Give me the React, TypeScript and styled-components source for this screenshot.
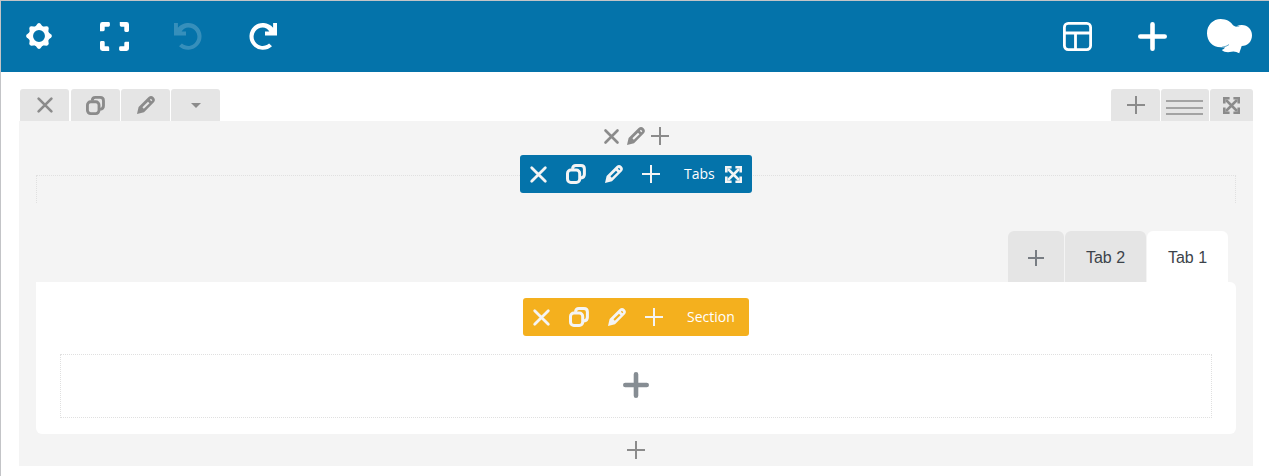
import React from 'react';
import styled, { createGlobalStyle } from 'styled-components';

const Global = createGlobalStyle`
  * { box-sizing: border-box; }
  body { margin: 0; background: #fff; font-family: "Open Sans", "Noto Sans", sans-serif; }
`;

const Page = styled.div`
  height: 476px;
  border-top: 1px solid #c3c4c7;
  border-left: 1px solid #c3c4c7;
  overflow: hidden;
`;

const Navbar = styled.header`
  display: flex;
  justify-content: space-between;
  height: 71px;
  background: #0473aa;
  color: #fff;
`;

const NavGroup = styled.div<{ $end?: boolean }>`
  display: flex;
  padding: ${p => (p.$end ? '0 1px 0 0' : '0')};
`;

const NavButton = styled.div<{ $dim?: boolean; $width?: number }>`
  display: flex;
  align-items: center;
  justify-content: center;
  width: ${p => p.$width ?? 75}px;
  height: 70px;
  opacity: ${p => (p.$dim ? 0.2 : 1)};
`;

const Icon = styled.svg`
  display: block;
  flex: none;
  overflow: visible;
`;

const Canvas = styled.main`
  padding: 17px 16px 0 18px;
`;

const RowControls = styled.div`
  display: flex;
  justify-content: space-between;
  padding-left: 1px;
  height: 32px;
  color: #8b8b8b;
`;

const ControlGroup = styled.div`
  display: flex;
  gap: 1px;
`;

const Control = styled.div<{ $width?: number; $gap?: number }>`
  display: flex;
  align-items: center;
  justify-content: center;
  width: ${p => p.$width ?? 49}px;
  margin-right: ${p => p.$gap ?? 0}px;
  background: #e5e5e5;
  border-radius: 3px 3px 0 0;
`;

const Lines = styled.div`
  width: 37px;
  height: 15px;
  margin: 5px 2px 0 0;
  display: flex;
  flex-direction: column;
  justify-content: space-between;
`;

const Line = styled.span`
  height: 2px;
  background: #a3a3a3;
`;

const Row = styled.section`
  height: 345px;
  padding: 0 17px;
  background: #f4f4f4;
`;

const ColumnControls = styled.div`
  display: flex;
  align-items: center;
  justify-content: center;
  height: 30px;
  color: #8b8b8b;
`;

const ToolbarArea = styled.div`
  display: flex;
  justify-content: center;
  height: 48px;
  padding-top: 4px;
`;

const Toolbar = styled.div<{ $color: string; $width: number }>`
  display: flex;
  align-items: center;
  width: ${p => p.$width}px;
  height: 38px;
  padding-left: 10px;
  border-radius: 3px;
  background: ${p => p.$color};
  color: #f4f4f4;
  flex: none;
`;

const ToolbarCell = styled.div<{ $width: number }>`
  width: ${p => p.$width}px;
  flex: none;
`;

const ToolbarLabel = styled.span<{ $width: number }>`
  width: ${p => p.$width}px;
  color: #fff;
  font-size: 14px;
  line-height: 20px;
  white-space: nowrap;
`;

const ElementFrame = styled.div`
  display: flex;
  justify-content: center;
  height: 28px;
  margin-top: 24px;
  border: 1px dotted #e0e0e0;
  border-bottom: 0;
`;

const ElementToolbar = styled.div`
  margin-top: -21px;
`;

const TabList = styled.div`
  display: flex;
  justify-content: flex-end;
  gap: 1px;
  height: 51px;
  margin-top: 28px;
  padding-right: 8px;
`;

const Tab = styled.div<{ $active?: boolean; $width?: number; $muted?: boolean }>`
  display: flex;
  align-items: center;
  justify-content: center;
  width: ${p => p.$width ?? 81}px;
  padding-top: 2px;
  border-radius: 6px 6px 0 0;
  background: ${p => (p.$active ? '#fff' : '#e5e5e5')};
  color: ${p => (p.$muted ? '#787d83' : '#3c434a')};
  font: 16px "Liberation Sans", Arial, sans-serif;
`;

const Panel = styled.div`
  height: 152px;
  padding: 12px 24px 0;
  border-radius: 0 6px 6px 6px;
  background: #fff;
`;

const DropZone = styled.div`
  display: flex;
  align-items: center;
  justify-content: center;
  height: 64px;
  margin-top: 12px;
  padding-bottom: 2px;
  border: 1px dotted #e0e0e0;
  color: #868d93;
`;

const RowFooter = styled.div`
  display: flex;
  align-items: center;
  justify-content: center;
  height: 32px;
  color: #8b8b8b;
`;

const Close = ({ size = 17, weight = 2.8 }) => (
  <Icon width={size} height={size} viewBox="0 0 17 17" fill="none" stroke="currentColor" strokeWidth={weight} strokeLinecap="round">
    <path d="M1.7 1.7 15.3 15.3M15.3 1.7 1.7 15.3" />
  </Icon>
);

const Plus = ({ size = 18, weight = 2 }) => (
  <Icon width={size} height={size} viewBox={`0 0 ${size} ${size}`} fill="none" stroke="currentColor" strokeWidth={weight} strokeLinecap={weight > 3 ? 'round' : 'butt'}>
    <path d={weight > 3
      ? `M${size / 2} ${weight / 2}V${size - weight / 2}M${weight / 2} ${size / 2}H${size - weight / 2}`
      : `M${size / 2} 0V${size}M0 ${size / 2}H${size}`} />
  </Icon>
);

const Copy = ({ size = 19 }) => (
  <Icon width={size} height={size} viewBox="0 0 20 20" fill="none" stroke="currentColor" strokeWidth="3">
    <rect x="1.5" y="6" width="12.2" height="12.5" rx="3.4" />
    <path d="M6.5 4.8C6.7 2.4 7.7 1.5 9.8 1.5H15C17.3 1.5 18.4 2.6 18.4 4.9V10.3C18.4 12.7 17.3 13.8 14.8 14.1" />
  </Icon>
);

const Pencil = ({ size = 18 }) => (
  <Icon width={size} height={size} viewBox="0 0 18 18" fill="currentColor" fillRule="evenodd">
    <path d="M0 18 1.6 10.9 11.6 1.1C13.3-.5 15-.3 16.6 1.2 18.2 2.9 18.4 4.7 16.9 6.3L7 16.2ZM5.4 11.3 6.8 12.7 12.5 7.2 11 5.7ZM12.9 3.8 14.3 5.2 15.3 4.2 13.9 2.8Z" />
  </Icon>
);

const Expand = () => (
  <Icon width="17" height="17" viewBox="0 0 17 17" fill="none" stroke="currentColor">
    <path strokeWidth="2.5" d="M3 3 14 14M14 3 3 14" />
    <path strokeWidth="2.6" d="M1.3 6.6V1.3H6.6M10.4 1.3H15.7V6.6M15.7 10.4V15.7H10.4M6.6 15.7H1.3V10.4" />
  </Icon>
);

const Gear = () => (
  <Icon width="26" height="26" viewBox="-13 -13 26 26" fill="currentColor">
    <circle r="8.1" fill="none" stroke="currentColor" strokeWidth="4.3" />
    {[0, 45, 90, 135, 180, 225, 270, 315].map(a => (
      <path key={a} transform={`rotate(${a})`} d="M-4.2-8.8-1.5-12.2Q0-13.8 1.5-12.2L4.2-8.8Z" />
    ))}
  </Icon>
);

const Fullscreen = () => (
  <Icon width="29" height="29" viewBox="0 0 29 29" fill="currentColor">
    {[0, 90, 180, 270].map(a => (
      <path key={a} transform={`rotate(${a} 14.5 14.5)`} d="M2.4 0H8.5Q9.9 0 9.9 1.4V3.3Q9.9 4.7 8.5 4.7H4.7V7.8Q4.7 9.2 3.3 9.2H0V2.4Q0 0 2.4 0Z" />
    ))}
  </Icon>
);

const Redo = ({ flip = false }) => (
  <Icon width="27" height="27" viewBox="0 0 27 27">
    <g transform={flip ? 'translate(27 0) scale(-1 1)' : undefined}>
      <path fill="currentColor" d="M27 0V12.4H15V8.5H19.4C17.6 5.9 15.4 4.5 12.8 4.5A9.2 9.2 0 1 0 19.1 20.4L22 23.2A13.4 13.4 0 1 1 23.1 4.7V0Z" />
    </g>
  </Icon>
);

const Layout = () => (
  <Icon width="29" height="29" viewBox="0 0 29 29" fill="none" stroke="currentColor" strokeWidth="2.8">
    <rect x="1.4" y="1.4" width="26.2" height="26.2" rx="3.8" />
    <path d="M1.5 11H27.5M12.5 11V27.5" />
  </Icon>
);

const Cloud = () => (
  <Icon width="45" height="35" viewBox="0 0 45 35" fill="currentColor">
    <path d="M13.7 0C19.6 0 23.8 2.8 26 6.3Q28.4 8.4 32.8 7.9Q31.4 7.2 29.3 7.2C38 3.5 45 8.8 45 16.2C45 22.6 40.7 26.8 34.7 27L32.2 34.3Q28.4 32 24.5 32.8C20.8 33.8 17 33.2 14.8 31.1Q16.9 30.3 18.2 28.6Q15.8 28.7 14.2 28.2C5.7 28.4 0 22.2 0 14.2C0 6.2 6 0 13.7 0Z" />
    <path d="M15 28.2Q19.5 27.6 22 25.6" fill="none" stroke="#0473aa" strokeWidth="0.6" />
  </Icon>
);

const Caret = () => (
  <Icon width="10" height="5" viewBox="0 0 10 5" fill="currentColor">
    <path d="M0 0H10L5 5Z" />
  </Icon>
);

const ToolbarActions = () => (
  <>
    <ToolbarCell $width={36}><Close /></ToolbarCell>
    <ToolbarCell $width={39}><Copy size={20} /></ToolbarCell>
    <ToolbarCell $width={37}><Pencil /></ToolbarCell>
    <ToolbarCell $width={42}><Plus /></ToolbarCell>
  </>
);

export default function App() {
  return (
    <Page>
      <Global />
      <Navbar>
        <NavGroup>
          <NavButton><Gear /></NavButton>
          <NavButton $width={77}><Fullscreen /></NavButton>
          <NavButton $dim $width={69}><Redo flip /></NavButton>
          <NavButton $width={83}><Redo /></NavButton>
        </NavGroup>
        <NavGroup $end>
          <NavButton><Layout /></NavButton>
          <NavButton><Plus size={29} weight={4.6} /></NavButton>
          <NavButton $width={78}><Cloud /></NavButton>
        </NavGroup>
      </Navbar>
      <Canvas>
        <RowControls>
          <ControlGroup>
            <Control $gap={1}><Close size={16} weight={2.8} /></Control>
            <Control><Copy /></Control>
            <Control><Pencil /></Control>
            <Control><Caret /></Control>
          </ControlGroup>
          <ControlGroup>
            <Control><Plus /></Control>
            <Control $width={48}><Lines><Line /><Line /><Line /></Lines></Control>
            <Control $width={43}><Expand /></Control>
          </ControlGroup>
        </RowControls>
        <Row>
          <ColumnControls>
            <ToolbarCell $width={23}><Close size={15} weight={3} /></ToolbarCell>
            <ToolbarCell $width={24}><Pencil /></ToolbarCell>
            <Plus />
          </ColumnControls>
          <ElementFrame>
            <ElementToolbar>
              <Toolbar $color="#0473aa" $width={232}>
                <ToolbarActions />
                <ToolbarLabel $width={41}>Tabs</ToolbarLabel>
                <Expand />
              </Toolbar>
            </ElementToolbar>
          </ElementFrame>
          <TabList>
            <Tab $width={56} $muted><Plus size={16} /></Tab>
            <Tab>Tab 2</Tab>
            <Tab $active>Tab 1</Tab>
          </TabList>
          <Panel>
            <ToolbarArea>
              <Toolbar $color="#f4b01e" $width={226}>
                <ToolbarActions />
                <ToolbarLabel $width={50}>Section</ToolbarLabel>
              </Toolbar>
            </ToolbarArea>
            <DropZone><Plus size={26} weight={4.6} /></DropZone>
          </Panel>
          <RowFooter><Plus /></RowFooter>
        </Row>
      </Canvas>
    </Page>
  );
}
